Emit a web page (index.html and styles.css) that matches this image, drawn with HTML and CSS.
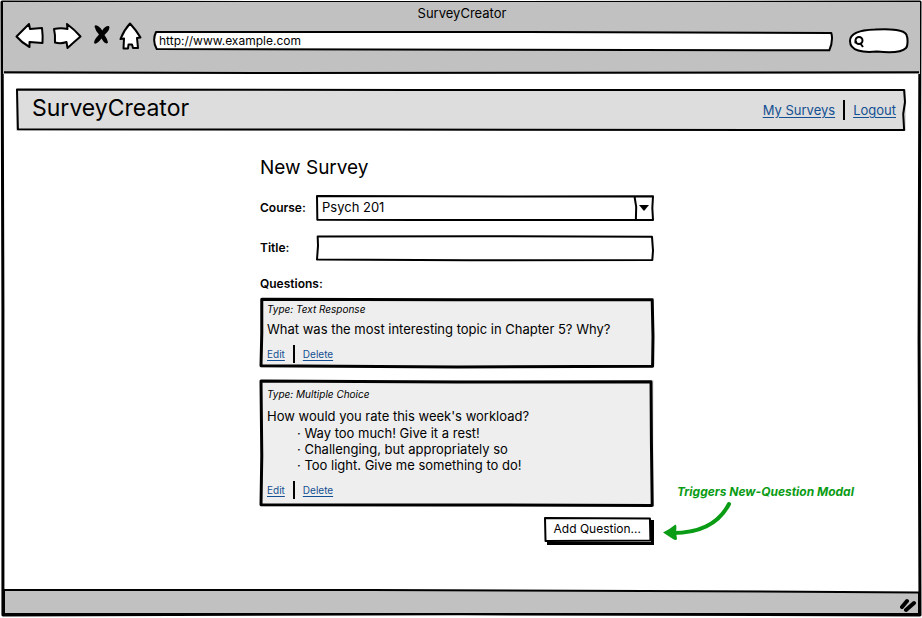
FILE: index.html
```html
<!DOCTYPE html>
<html lang="en">
<head>
<meta charset="utf-8">
<meta name="viewport" content="width=device-width, initial-scale=1">
<title>SurveyCreator</title>
<link rel="stylesheet" href="styles.css">
</head>
<body>
<div class="window">
  <svg class="sketch frame" viewBox="0 0 100 100" preserveAspectRatio="none" aria-hidden="true"><path d="M0 0 L40 .1 L100 0 L99.900 55 L100 100 L50 99.800 L.1 100 L.1 50Z"/></svg>
  <header class="chrome">
    <svg class="sketch rule" viewBox="0 0 100 100" preserveAspectRatio="none" aria-hidden="true"><path d="M0 99 L30 100 L60 99.500 L100 99"/></svg>
    <div class="window-title">SurveyCreator</div>
    <div class="toolbar">
      <button class="tool" type="button" aria-label="Back"><svg width="28" height="28" viewBox="0 0 28 28"><path class="outline" d="M1.500 13.500 L14 1 L15 6 L27 5 Q28 13 27.500 20 L14.500 19 L14.500 24 Q7 20 1.500 13.500Z"/></svg></button>
      <button class="tool" type="button" aria-label="Forward"><svg width="28" height="28" viewBox="0 0 28 28"><path class="outline" d="M14 1 Q22 7 27.500 13.500 Q21 19 14.500 25 L13.500 19 Q8 21 2 19.500 Q2.500 12 1 6 Q8 4.500 14.500 6Z"/></svg></button>
      <button class="tool" type="button" aria-label="Stop"><svg width="18" height="28" viewBox="0 0 18 28"><path d="M3.500 3.500 Q4 1.500 7 3 Q10 5 11.300 7.500 Q14 2.500 18 3 Q20 6 13.500 12 Q16.500 16 17 19.500 Q14.500 22.500 10.500 15.500 Q6 21.500 3.500 20.500 Q1.500 18.500 8 11.500 Q4.500 8 3.500 3.500Z"/></svg></button>
      <button class="tool" type="button" aria-label="Home"><svg width="24" height="28" viewBox="0 0 24 28"><path class="outline" d="M11 .5 Q17 7 21.500 14.500 L18 15 L19 25 L14 25 L13 21.500 L9.500 21.500 L9 25.500 L4.500 25.500 L5 15.500 L1.500 16 Q5 7 11 .5Z"/></svg></button>
      <div class="address">
        <svg class="sketch white" viewBox="0 0 100 100" preserveAspectRatio="none" aria-hidden="true"><path d="M.3 0 L55 0 L99.900 5 Q100.200 50 99.600 102 L50 98 L.4 94 Q-.3 48 .3 0Z"/></svg>
        <input type="text" value="http://www.example.com" aria-label="Address">
      </div>
      <div class="search">
        <svg class="pill" width="60" height="26" viewBox="0 0 60 26" aria-hidden="true"><path class="outline" d="M1 13 C1 5 11 2 26 1.500 C42 .5 56 2 57.500 7 C59 10 59 18 57 20 C52 25 37 24.500 28 23.500 C14 25 1 23 1 13Z"/><circle cx="10" cy="12.500" r="3.500"/><path d="M5.500 14.500 L8 14 M11 15 L14 19"/></svg>
        <input type="search" aria-label="Search">
      </div>
    </div>
  </header>

  <main class="page">
    <nav class="site-bar" aria-label="Site">
      <svg class="sketch" viewBox="0 0 100 100" preserveAspectRatio="none" aria-hidden="true"><path d="M0 -1 L45 0 L99.900 0 L100 30 L99.800 60 L99.900 100 L40 99 L.1 98Z"/></svg>
      <a class="brand" href="#">SurveyCreator</a>
      <div class="site-links"><a href="#">My Surveys</a><a href="#">Logout</a></div>
    </nav>

    <form class="survey">
      <h1>New Survey</h1>
      <div class="field">
        <label for="course">Course:</label>
        <div class="control">
          <svg class="sketch white" viewBox="0 0 100 100" preserveAspectRatio="none" aria-hidden="true"><path d="M0 0 L60 2 L100 1 L99.800 50 L100 100 L30 100 L.1 99Z M94.500 2 L95 45 L94.900 100"/></svg>
          <select id="course"><option>Psych 201</option></select>
          <svg class="caret" width="10" height="6" viewBox="0 0 10 6" aria-hidden="true"><path d="M0 0H10L5 6Z"/></svg>
        </div>
      </div>
      <div class="field">
        <label for="title">Title:</label>
        <div class="control">
          <svg class="sketch white" viewBox="0 0 100 100" preserveAspectRatio="none" aria-hidden="true"><path d="M.2 2 L50 1 L99.700 3 L100 60 L99.800 100 L45 101 L0 98 L.3 40Z"/></svg>
          <input id="title" type="text">
        </div>
      </div>

      <h2>Questions:</h2>
      <article class="question">
        <svg class="sketch" viewBox="0 0 100 100" preserveAspectRatio="none" aria-hidden="true"><path d="M.2 .5 L50 1 L99.800 1 L100 55 L99.900 99 L50 100 L0 98 L.2 50Z"/></svg>
        <p class="type">Type: Text Response</p>
        <p>What was the most interesting topic in Chapter 5? Why?</p>
        <div class="actions"><a href="#">Edit</a><a href="#">Delete</a></div>
      </article>
      <article class="question choice">
        <svg class="sketch" viewBox="0 0 100 100" preserveAspectRatio="none" aria-hidden="true"><path d="M0 0 L50 .8 L99.500 .6 L99.600 50 L99.800 99.500 L50 99.200 L0 99 L.2 60Z"/></svg>
        <p class="type">Type: Multiple Choice</p>
        <p>How would you rate this week's workload?</p>
        <ul>
          <li>Way too much! Give it a rest!</li>
          <li>Challenging, but appropriately so</li>
          <li>Too light. Give me something to do!</li>
        </ul>
        <div class="actions"><a href="#">Edit</a><a href="#">Delete</a></div>
      </article>

      <div class="submit-row">
        <button class="add" type="button">
          <svg class="sketch white" viewBox="0 0 100 100" preserveAspectRatio="none" aria-hidden="true"><path d="M0 0 L99.500 2 L100 98 L.5 100Z"/></svg>
          <span>Add Question...</span>
        </button>
        <aside class="note">
          <span>Triggers New-Question Modal</span>
          <svg width="70" height="42" viewBox="0 0 70 42" aria-hidden="true"><path class="stem" d="M66 4 Q51 33 10 33"/><path d="M0 32.500 Q7 29 12.500 24.500 Q14 25 13 32 L14 39 Q13 41 10 39Z"/></svg>
        </aside>
      </div>
    </form>
  </main>

  <footer class="status">
    <svg class="sketch rule" viewBox="0 0 100 100" preserveAspectRatio="none" aria-hidden="true"><path class="fill" d="M0 0 L40 0 L70 4 L100 10 L100 100 L0 100Z"/></svg>
    <svg class="grip" width="18" height="16" viewBox="0 0 18 16" aria-hidden="true"><path d="M2 10 L7 4 M6 13 L14 6"/></svg>
  </footer>
</div>
</body>
</html>
```

FILE: styles.css
```css
* { box-sizing: border-box; }

body {
  margin: 0;
  background: #fff;
  color: #000;
  font: 13px/16px Inter, "Open Sans", sans-serif;
}

input, select, button { font: inherit; color: inherit; }

input, select {
  position: relative;
  width: 100%;
  border: 0;
  background: transparent;
  appearance: none;
}

p, h1, h2, ul { margin: 0; padding: 0; }

a { color: #134f92; text-underline-offset: 2px; }

/* Hand-drawn outlines stretched behind each box */
.sketch {
  position: absolute;
  inset: 1px;
  width: calc(100% - 2px);
  height: calc(100% - 2px);
  overflow: visible;
  pointer-events: none;
}

.sketch path {
  fill: none;
  stroke: #000;
  stroke-width: 2px;
  stroke-linejoin: round;
  vector-effect: non-scaling-stroke;
}

.sketch.white path { fill: #fff; }

.window {
  position: relative;
  display: flex;
  flex-direction: column;
  min-height: 100vh;
  padding: 2px 2px 3px 3px;
}

.frame {
  inset: 2px;
  width: calc(100% - 4px);
  height: calc(100% - 5px);
}

.frame path { stroke-width: 3px; }

.chrome {
  position: relative;
  padding: 1px 11px 20px 12px;
  background: #c1c1c1;
}

.window-title {
  line-height: 20px;
  text-align: center;
}

.toolbar {
  display: flex;
  align-items: flex-start;
  gap: 10px;
}

.tool {
  display: flex;
  padding: 0;
  border: 0;
  background: none;
}

.tool svg, .pill { overflow: visible; }

.outline {
  fill: #fff;
  stroke: #000;
  stroke-width: 2px;
  stroke-linejoin: round;
}

.address {
  position: relative;
  flex: 1;
  margin-top: 8px;
}

.address input {
  display: block;
  height: 20px;
  padding: 0 6px 2px;
  font-size: 12px;
}

.search {
  position: relative;
  width: 60px;
  height: 26px;
  margin: 5px 0 0 6px;
}

.pill { position: absolute; inset: 0; }

.pill circle, .pill path:last-child {
  fill: none;
  stroke: #000;
  stroke-width: 2px;
}

.search input { height: 26px; padding: 0 8px 0 18px; }

.page {
  display: flex;
  flex: 1;
  flex-direction: column;
  padding: 15px 14px 0 13px;
}

.site-bar {
  position: relative;
  display: flex;
  align-items: center;
  justify-content: space-between;
  height: 42px;
  padding: 0 10px 0 16px;
  background: #ddd;
}

.brand {
  position: relative;
  padding-bottom: 4px;
  color: #000;
  font-size: 23px;
  line-height: 36px;
  text-decoration: none;
}

.site-links, .actions {
  position: relative;
  display: flex;
  align-items: center;
}

.site-links a + a, .actions a + a {
  margin-left: 8px;
  padding-left: 8px;
  border-left: 2px solid #000;
}

.site-links a + a { line-height: 20px; }

.survey {
  position: relative;
  right: 4px;
  width: 394px;
  max-width: 100%;
  margin: 25px auto 16px;
}

h1 {
  margin-bottom: 15px;
  font-size: 19px;
  font-weight: 400;
  line-height: 24px;
}

.field {
  display: flex;
  align-items: center;
  margin-bottom: 14px;
}

.field label { width: 56px; font-size: 12px; font-weight: 600; }

.control { position: relative; flex: 1; }

.control input, .control select {
  display: block;
  height: 26px;
  padding: 0 24px 2px 6px;
}

.caret { position: absolute; top: 10px; right: 5px; pointer-events: none; }

h2 {
  margin-bottom: 5px;
  font-size: 12px;
  font-weight: 600;
  line-height: 18px;
}

.question {
  position: relative;
  margin-bottom: 12px;
  padding: 5px 7px;
  background: #eee;
}

.question .sketch path { stroke-width: 3px; }

.question p, .question ul { position: relative; }

.question .type {
  margin-bottom: 6px;
  font-size: 10px;
  font-style: italic;
  line-height: 12px;
}

.actions {
  margin-top: 8px;
  font-size: 10px;
  line-height: 18px;
}

.choice { margin-bottom: 10px; padding: 8px 7px; }

.choice .type { margin-bottom: 8px; }

.choice ul { list-style: none; padding: 1px 0 0 30px; }

.choice li::before { content: "· "; }

.submit-row {
  position: relative;
  display: flex;
  justify-content: flex-end;
  padding-right: 3px;
}

.add {
  position: relative;
  padding: 4px 10px 5px;
  border: 0;
  background: #fff;
  box-shadow: 3px 3px 0 #000;
  font-size: 12px;
}

.add span { position: relative; }

.note {
  position: absolute;
  bottom: 0;
  left: 100%;
  padding-left: 9px;
  color: #0a9c14;
  font-size: 12px;
  font-style: italic;
  font-weight: 700;
  white-space: nowrap;
}

.note span { display: block; padding-left: 14px; }

.note svg { display: block; fill: #0a9c14; }

.stem { fill: none; stroke: #0a9c14; stroke-width: 4px; stroke-linecap: round; }

.status {
  position: relative;
  display: flex;
  justify-content: flex-end;
  align-items: flex-end;
  height: 26px;
  padding: 0 2px 2px;
}

.sketch .fill { fill: #c1c1c1; }

.grip { position: relative; fill: none; stroke: #000; stroke-width: 4px; stroke-linecap: round; }
```
